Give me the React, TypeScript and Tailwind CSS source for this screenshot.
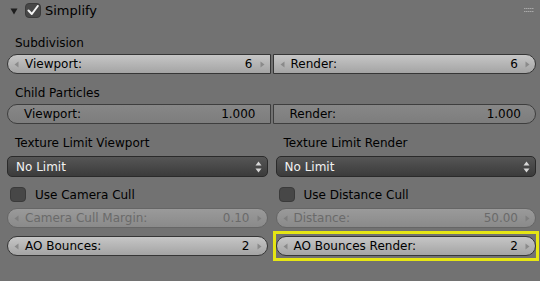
import React from 'react';

type Shape = 'full' | 'left' | 'right';
type Variant = 'normal' | 'slider' | 'disabled';

function ArrowLeftTiny({ className }: { className: string }) {
  return (
    <svg width="5" height="7" viewBox="0 0 5 7" className={className}>
      <path d="M4.5 0.5 L0.5 3.5 L4.5 6.5 Z" fill="currentColor" />
    </svg>
  );
}

function ArrowRightTiny({ className }: { className: string }) {
  return (
    <svg width="5" height="7" viewBox="0 0 5 7" className={className}>
      <path d="M0.5 0.5 L4.5 3.5 L0.5 6.5 Z" fill="currentColor" />
    </svg>
  );
}

function NumField({
  label,
  value,
  shape = 'full',
  variant = 'normal',
}: {
  label: string;
  value: string;
  shape?: Shape;
  variant?: Variant;
}) {
  const rounded =
    shape === 'full' ? 'rounded-full' : shape === 'left' ? 'rounded-l-full' : 'rounded-r-full';

  const skin =
    variant === 'normal'
      ? 'bg-linear-to-b from-[#c6c6c6] to-[#a4a4a4] border-[#363636] text-black'
      : variant === 'slider'
        ? 'bg-linear-to-b from-[#878787] to-[#7d7d7d] border-[#3e3e3e] text-black'
        : 'bg-linear-to-b from-[#9a9a9a] to-[#8a8a8a] border-[#666666] text-[#6a6a6a]';

  const arrowColor = variant === 'disabled' ? 'text-[#7e7e7e]' : 'text-[#8a8a8a]';
  const hasArrows = variant !== 'slider';

  return (
    <div
      className={`h-[20px] ${rounded} ${skin} border flex items-center text-[12px] leading-none ${
        hasArrows ? 'pl-[6px] pr-[5px]' : 'pl-[16px] pr-[14px]'
      }`}
    >
      {hasArrows && <ArrowLeftTiny className={`${arrowColor} shrink-0`} />}
      <span className={`flex-1 ${hasArrows ? 'pl-[6px]' : ''}`}>{label}</span>
      <span className={hasArrows ? 'pr-[7px]' : ''}>{value}</span>
      {hasArrows && <ArrowRightTiny className={`${arrowColor} shrink-0`} />}
    </div>
  );
}

function Dropdown({ value }: { value: string }) {
  return (
    <div className="h-[21px] rounded-[5px] border border-[#2a2a2a] bg-linear-to-b from-[#565656] to-[#3b3b3b] text-[#f2f2f2] flex items-center pl-[8px] pr-[5px] text-[12px] leading-none">
      <span className="flex-1">{value}</span>
      <svg width="7" height="12" viewBox="0 0 7 12" className="text-[#d8d8d8]">
        <path d="M3.5 0.5 L6.5 4.5 L0.5 4.5 Z" fill="currentColor" />
        <path d="M0.5 7.5 L6.5 7.5 L3.5 11.5 Z" fill="currentColor" />
      </svg>
    </div>
  );
}

function Check({ checked = false }: { checked?: boolean }) {
  return (
    <div className="w-[16px] h-[15px] rounded-[4px] bg-[#474747] border border-[#3a3a3a] flex items-center justify-center shrink-0">
      {checked && (
        <svg width="12" height="11" viewBox="0 0 12 11">
          <path
            d="M1.5 5.5 L4.8 9 L10.8 1"
            stroke="#f4f4f4"
            strokeWidth="2"
            fill="none"
            strokeLinecap="round"
            strokeLinejoin="round"
          />
        </svg>
      )}
    </div>
  );
}

function Label({ children }: { children: React.ReactNode }) {
  return <div className="h-[16px] leading-[16px] text-[12px] pl-[8px] text-black">{children}</div>;
}

export default function App() {
  return (
    <div className="w-[540px] h-[281px] bg-[#727272] overflow-hidden font-['DejaVu_Sans',sans-serif] text-black">
      {/* Panel header */}
      <div className="h-[21px] flex items-center pl-[10px] pr-[6px]">
        <svg width="8" height="7" viewBox="0 0 8 7" className="mt-[1px]">
          <path d="M0.5 0.5 L7.5 0.5 L4 6.5 Z" fill="#1e1e1e" />
        </svg>
        <div className="ml-[7px]">
          <Check checked />
        </div>
        <span className="ml-[4px] text-[13px] leading-none">Simplify</span>
        <div className="flex-1" />
        <svg width="10" height="7" viewBox="0 0 10 7">
          {[0, 2, 4, 6, 8].map((x) => (
            <React.Fragment key={x}>
              <rect x={x} y="1" width="1.5" height="1" fill="#a8a8a8" />
              <rect x={x} y="4" width="1.5" height="1" fill="#a8a8a8" />
            </React.Fragment>
          ))}
        </svg>
      </div>

      <div className="pl-[7px] pr-[4px]">
        {/* Subdivision */}
        <div className="mt-[14px]">
          <Label>Subdivision</Label>
        </div>
        <div className="mt-[3px] flex gap-[2px]">
          <div className="flex-1">
            <NumField label="Viewport:" value="6" shape="left" />
          </div>
          <div className="flex-1">
            <NumField label="Render:" value="6" shape="right" />
          </div>
        </div>

        {/* Child Particles */}
        <div className="mt-[11px]">
          <Label>Child Particles</Label>
        </div>
        <div className="mt-[3px] flex gap-[2px]">
          <div className="flex-1">
            <NumField label="Viewport:" value="1.000" shape="left" variant="slider" />
          </div>
          <div className="flex-1">
            <NumField label="Render:" value="1.000" shape="right" variant="slider" />
          </div>
        </div>

        {/* Two columns */}
        <div className="mt-[11px] grid grid-cols-2 gap-x-[8px]">
          <div className="flex flex-col">
            <Label>Texture Limit Viewport</Label>
            <div className="mt-[5px]">
              <Dropdown value="No Limit" />
            </div>
            <div className="mt-[10px] h-[15px] flex items-center pl-[3px]">
              <Check />
              <span className="ml-[9px] text-[12px] leading-none">Use Camera Cull</span>
            </div>
            <div className="mt-[6px]">
              <NumField label="Camera Cull Margin:" value="0.10" variant="disabled" />
            </div>
            <div className="mt-[8px]">
              <NumField label="AO Bounces:" value="2" />
            </div>
          </div>

          <div className="flex flex-col">
            <Label>Texture Limit Render</Label>
            <div className="mt-[5px]">
              <Dropdown value="No Limit" />
            </div>
            <div className="mt-[10px] h-[15px] flex items-center pl-[3px]">
              <Check />
              <span className="ml-[9px] text-[12px] leading-none">Use Distance Cull</span>
            </div>
            <div className="mt-[6px]">
              <NumField label="Distance:" value="50.00" variant="disabled" />
            </div>
            <div className="mt-[8px] relative">
              <NumField label="AO Bounces Render:" value="2" />
              <div className="absolute -left-[3px] -right-[3px] -top-[5px] -bottom-[5px] border-[3px] border-[#e6e614] pointer-events-none" />
            </div>
          </div>
        </div>
      </div>
    </div>
  );
}
